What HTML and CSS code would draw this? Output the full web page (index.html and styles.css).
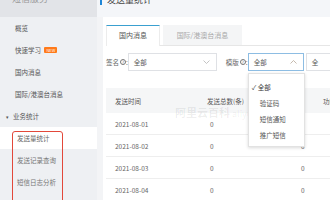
FILE: index.html
```html
<!DOCTYPE html>
<html lang="zh-CN">
<head>
<meta charset="utf-8">
<link rel="stylesheet" href="styles.css">
</head>
<body>
<div class="app">
  <aside class="sidebar">
    <div class="side-head"><span class="side-title">短信服务</span></div>
    <div class="nav-item">概览</div>
    <div class="nav-item">快速学习 <span class="badge">NEW</span></div>
    <div class="nav-item">国内消息</div>
    <div class="nav-item">国际/港澳台消息</div>
    <div class="nav-item nav-group"><span class="caret">▾</span>业务统计</div>
    <div class="sub-group">
      <div class="nav-item sub active">发送量统计</div>
      <div class="nav-item sub">发送记录查询</div>
      <div class="nav-item sub">短信日志分析</div>
    </div>
  </aside>
  <main class="main">
    <div class="page-head"><span class="head-bar"></span><span class="head-title">发送量统计</span></div>
    <div class="card">
      <div class="tabs">
        <div class="tab tab-active">国内消息</div>
        <div class="tab">国际/港澳台消息</div>
      </div>
      <div class="filters">
        <span class="label label-sign">签名<span class="qmark">?</span>:</span>
        <div class="select select-sign">
          <span>全部</span>
          <svg class="chev" width="7" height="4" viewBox="0 0 7 4"><polyline points="0.5,0.5 3.5,3.5 6.5,0.5" fill="none" stroke="#b5b5b5" stroke-width="0.8"/></svg>
        </div>
        <span class="label label-tpl">模版<span class="qmark">?</span>:</span>
        <div class="select select-tpl">
          <span>全部</span>
          <svg class="chev" width="7" height="4" viewBox="0 0 7 4"><polyline points="0.5,3.5 3.5,0.5 6.5,3.5" fill="none" stroke="#b8a898" stroke-width="0.8"/></svg>
          <ul class="dropdown">
            <li class="opt opt-checked"><span class="check">✓</span>全部</li>
            <li class="opt">验证码</li>
            <li class="opt">短信通知</li>
            <li class="opt">推广短信</li>
          </ul>
        </div>
        <div class="select select-more"><span>全</span></div>
      </div>
      <div class="table">
        <div class="tr thead">
          <div class="td c1">发送时间</div>
          <div class="td c2">发送总数(条)</div>
          <div class="td c3 h3">功能</div>
        </div>
        <div class="tr">
          <div class="td c1">2021-08-01</div>
          <div class="td c2 v2">0</div>
          <div class="td c3 v3">0</div>
        </div>
        <div class="tr">
          <div class="td c1">2021-08-02</div>
          <div class="td c2 v2">0</div>
          <div class="td c3 v3">0</div>
        </div>
        <div class="tr">
          <div class="td c1">2021-08-03</div>
          <div class="td c2 v2">0</div>
          <div class="td c3 v3">0</div>
        </div>
        <div class="tr">
          <div class="td c1">2021-08-04</div>
          <div class="td c2 v2">0</div>
          <div class="td c3 v3">0</div>
        </div>
      </div>
      <div class="watermark"><b>阿里云百科</b> aliyunbaike.com</div>
    </div>
  </main>
</div>
</body>
</html>
```

FILE: styles.css
```css
* { box-sizing: border-box; margin: 0; padding: 0; }
html, body { width: 330px; height: 200px; overflow: hidden; }
body {
  font-family: "Noto Sans CJK SC", "Noto Sans", sans-serif;
  color: #666;
  background: #f3f4f6;
}
.app { display: flex; height: 200px; overflow: hidden; }

/* sidebar */
.sidebar { width: 97px; flex: none; background: #eef0f3; overflow: hidden; }
.side-head {
  height: 17px;
  background: #e2e4e8;
  overflow: hidden;
  padding-left: 12px;
}
.side-title {
  display: block;
  font-size: 9px;
  line-height: 9px;
  margin-top: -6px;
  color: #999;
}
.nav-item {
  height: 22px;
  line-height: 22px;
  font-size: 6.5px;
  color: #555;
  padding-left: 15px;
  white-space: nowrap;
}
.badge {
  display: inline-block;
  background: #ff7a1a;
  color: #fff;
  font-size: 4px;
  line-height: 6px;
  height: 6px;
  padding: 0 2px;
  margin-left: 2px;
  vertical-align: 1px;
  border-radius: 1px;
}
.nav-group { padding-left: 6px; }
.caret { font-size: 5px; margin-right: 4px; color: #555; }
.sub-group { position: relative; }
.sub { padding-left: 17px; color: #777; }
.sub.active { background: #fff; color: #666; }
.sub-group::after {
  content: "";
  position: absolute;
  left: 12px;
  top: 4px;
  width: 49px;
  height: 90px;
  border: 1.5px solid #e2483a;
  border-radius: 3px;
}

/* main */
.main { flex: 1; display: flex; flex-direction: column; min-width: 0; overflow: hidden; }
.page-head {
  height: 17px;
  flex: none;
  display: flex;
  align-items: flex-start;
  padding-left: 3px;
  overflow: hidden;
  background: #f4f6f9;
}
.head-bar { width: 2px; height: 5px; background: #1f86d6; margin-right: 5px; }
.head-title { font-size: 9px; line-height: 9px; margin-top: -5px; color: #444; }

.card {
  flex: 1;
  position: relative;
  background: #fff;
  margin-left: 6px;
  padding: 8px 0 0 3px;
  overflow: hidden;
}
.tabs {
  display: flex;
  gap: 3px;
  height: 21px;
  border-bottom: 1px solid #e6e6e6;
}
.tab {
  height: 20px;
  line-height: 20px;
  font-size: 7px;
  text-align: center;
  background: #f4f5f6;
  color: #aaa;
  width: 79px;
}
.tab-active {
  width: 54px;
  background: #fff;
  color: #555;
  border-top: 1.5px solid #3aa0d0;
  border-left: 1px solid #ececec;
  border-right: 1px solid #ececec;
  height: 21px;
  line-height: 18px;
}
.filters {
  display: flex;
  align-items: center;
  height: 18px;
  margin-top: 7px;
  font-size: 6.5px;
}
.label { display: flex; align-items: center; color: #666; white-space: nowrap; }
.label-sign { width: 33px; }
.label-tpl { width: 27px; margin-left: 9px; }
.qmark {
  display: inline-flex;
  align-items: center;
  justify-content: center;
  width: 6px;
  height: 6px;
  border: 0.7px solid #777;
  border-radius: 50%;
  font-size: 4.5px;
  line-height: 1;
  margin-left: 1px;
}
.select {
  position: relative;
  height: 18px;
  border: 1px solid #dfe1e5;
  display: flex;
  align-items: center;
  justify-content: space-between;
  padding: 0 6px 0 5px;
  color: #555;
  flex: none;
}
.select-sign { width: 89px; }
.select-tpl { width: 56px; border-color: #8dbde3; }
.select-more { width: 40px; margin-left: 2px; }
.chev { display: block; }
.dropdown {
  list-style: none;
  position: absolute;
  left: -1px;
  top: 19px;
  width: 57px;
  height: 74px;
  background: #fff;
  border: 1px solid #e2e2e2;
  box-shadow: 0 1px 3px rgba(0,0,0,0.15);
  padding-top: 5px;
  z-index: 5;
}
.opt {
  height: 16px;
  line-height: 16px;
  padding-left: 11px;
  color: #555;
  white-space: nowrap;
}
.opt-checked { padding-left: 3px; color: #333; }
.check { display: inline-block; width: 6px; color: #333; }

.table { margin-top: 17px; font-size: 6.5px; }
.tr {
  display: flex;
  height: 22px;
  align-items: center;
  border-bottom: 1px solid #eeeeee;
  white-space: nowrap;
}
.thead { height: 25px; background: #f5f6f7; border-bottom: none; color: #555; }
.td { flex: none; }
.c1 { width: 94px; padding-left: 9px; }
.c2 { width: 95px; padding-left: 7px; }
.v2 { padding-left: 10px; }
.c3 { width: 40px; }
.h3 { padding-left: 28px; }
.v3 { padding-left: 6px; }

.watermark {
  position: absolute;
  left: 72px;
  top: 87px;
  font-size: 9px;
  color: rgba(0,0,0,0.07);
  white-space: nowrap;
  z-index: 3;
}
.watermark b { font-size: 11px; font-weight: 700; }
```
